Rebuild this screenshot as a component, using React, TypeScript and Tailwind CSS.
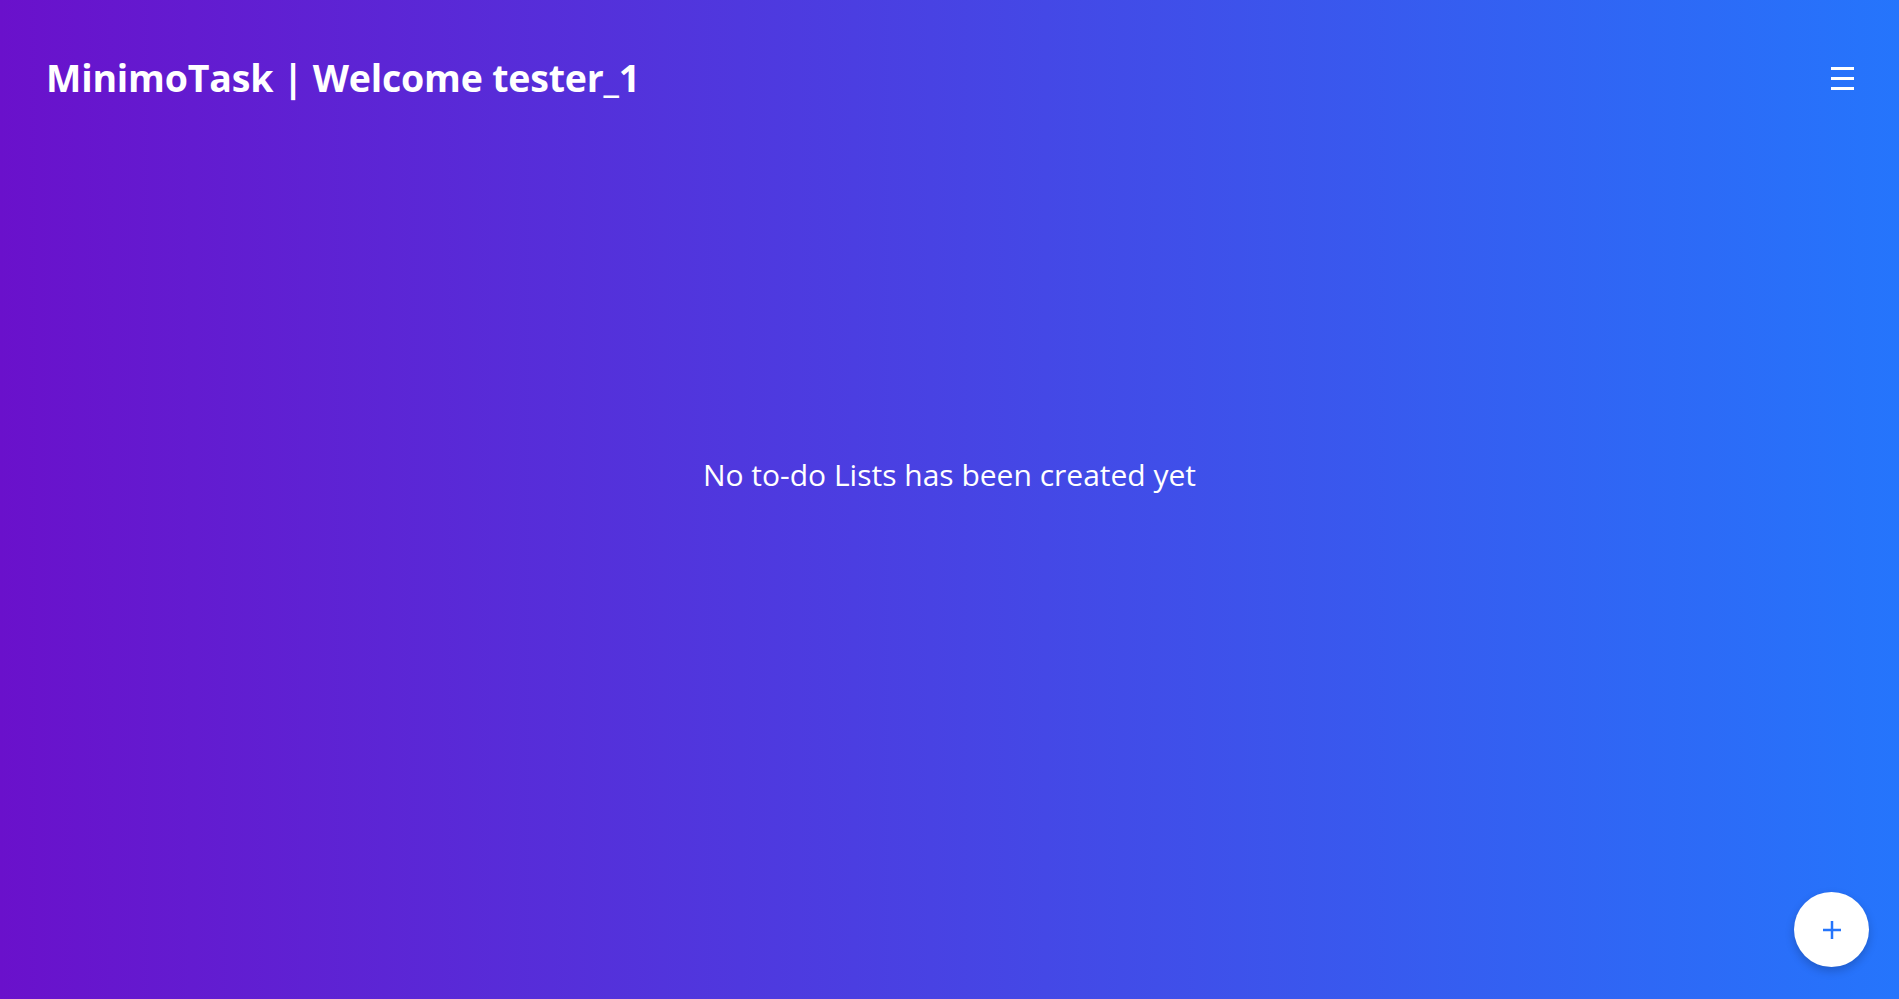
import React from "react";

export default function App() {
  return (
    <div
      className="relative flex min-h-screen w-full flex-col bg-[linear-gradient(to_right,#6a11cb,#2575fc)] text-white"
      style={{ fontFamily: '"Segoe UI", "Open Sans", "Noto Sans", sans-serif' }}
    >
      <header className="flex h-[156px] items-center justify-between pl-[46px] pr-[45px]">
        <h1 className="text-[37.5px] font-bold leading-none tracking-[-0.2px]">
          MinimoTask | Welcome tester_1
        </h1>
        <button className="flex h-[23px] w-[23px] flex-col justify-between" aria-label="menu">
          <span className="block h-[3px] w-full bg-white" />
          <span className="block h-[3px] w-full bg-white" />
          <span className="block h-[3px] w-full bg-white" />
        </button>
      </header>
      <main className="flex flex-1 items-center justify-center pb-[205px]">
        <p className="text-[30px] leading-[40px]">No to-do Lists has been created yet</p>
      </main>
      <button
        className="absolute bottom-[32px] right-[30px] flex h-[75px] w-[75px] items-center justify-center rounded-full bg-white shadow-[0_4px_10px_rgba(0,0,0,0.2)]"
        aria-label="add"
      >
        <svg width="20" height="20" viewBox="0 0 20 20" fill="none">
          <path d="M10 1v18M1 10h18" stroke="#2575fc" strokeWidth="2.5" />
        </svg>
      </button>
    </div>
  );
}
